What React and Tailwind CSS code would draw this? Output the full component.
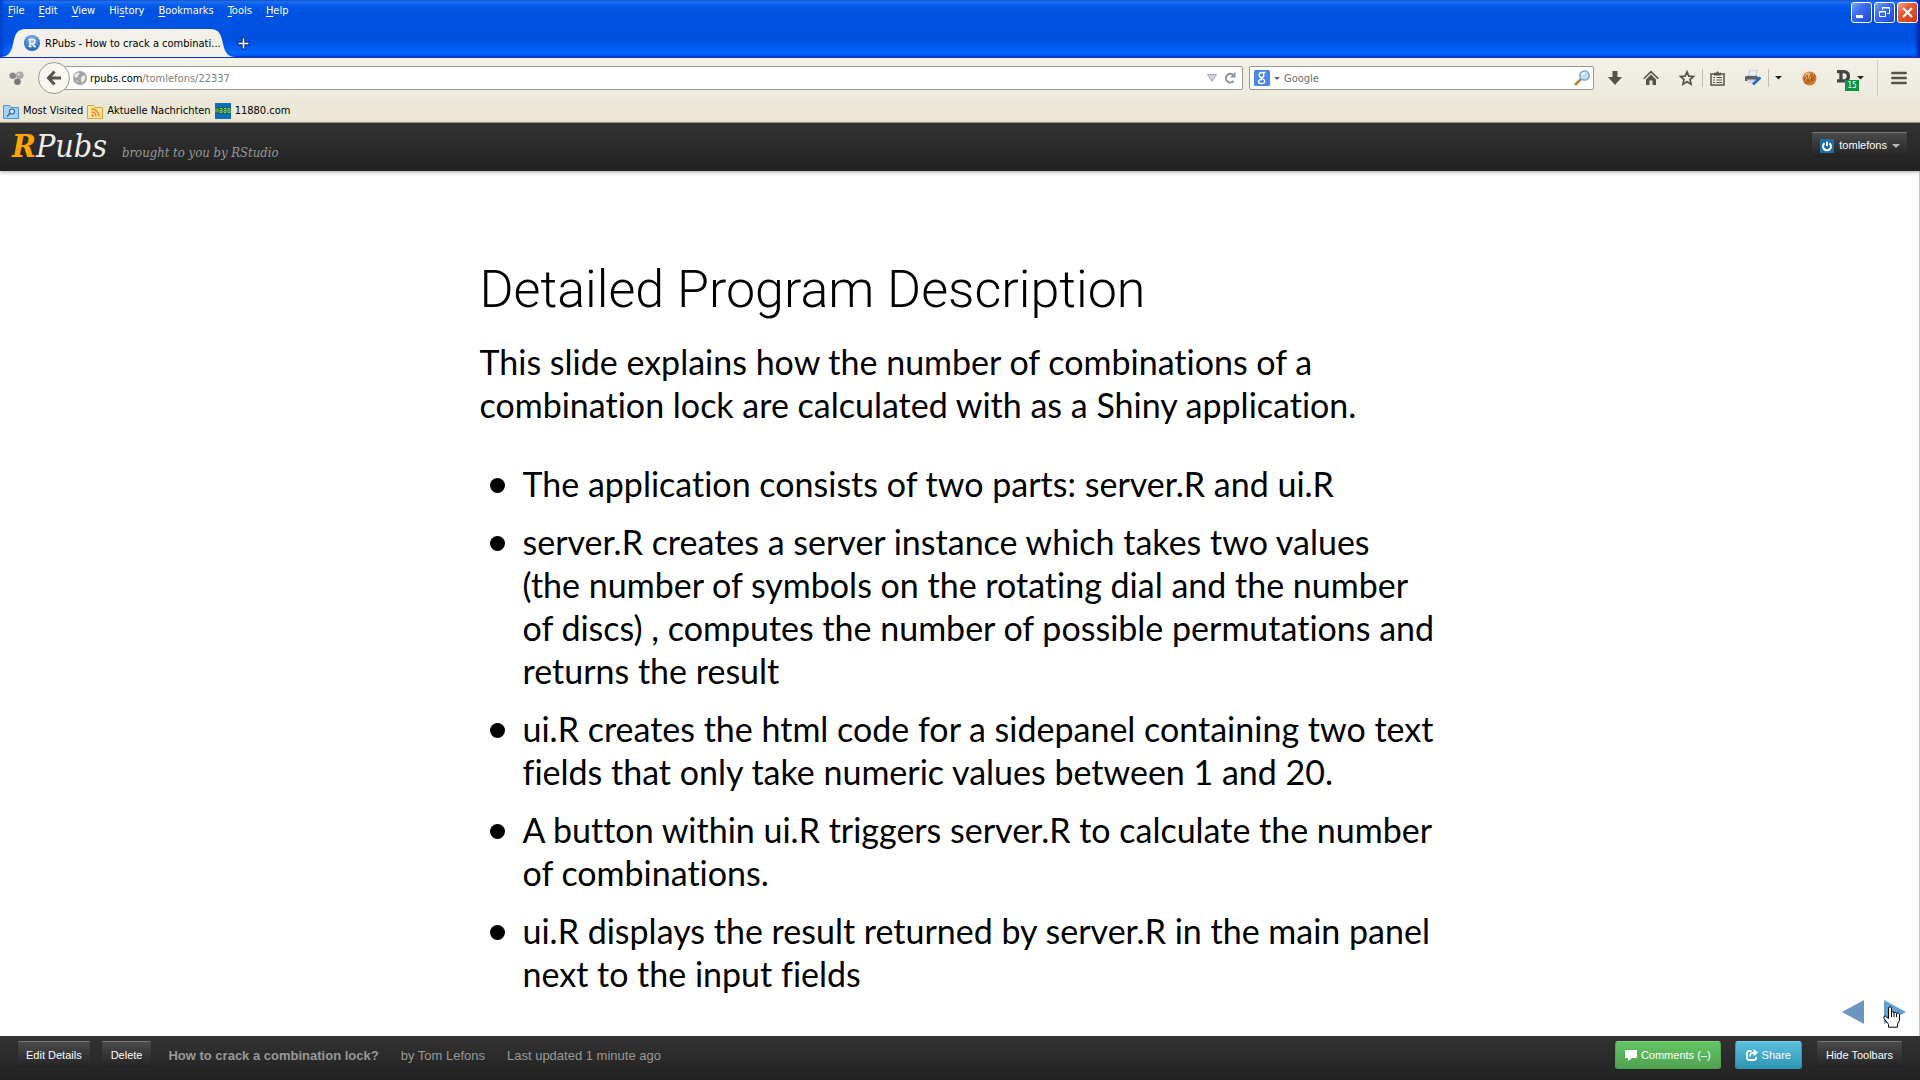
import React from "react";

const menus = ["File", "Edit", "View", "History", "Bookmarks", "Tools", "Help"];
const accessKeys = [0, 0, 0, 2, 0, 0, 0];

const bullets = [
  "The application consists of two parts: server.R and ui.R",
  "server.R creates a server instance which takes two values\n(the number of symbols on the rotating dial and the number\nof discs) , computes the number of possible permutations and returns the result",
  "ui.R creates the html code for a sidepanel containing two text fields that only take numeric values between 1 and 20.",
  "A button within ui.R triggers server.R to calculate the number of combinations.",
  "ui.R displays the result returned by server.R in the main panel next to the input fields",
];

function MenuLabel({ text, at }) {
  return (
    <>
      {text.slice(0, at)}
      <span className="underline underline-offset-2">{text[at]}</span>
      {text.slice(at + 1)}
    </>
  );
}

function Caret({ className }) {
  return (
    <svg viewBox="0 0 8 4" className={className} fill="currentColor" aria-hidden="true">
      <path d="M0 0h8L4 4z" />
    </svg>
  );
}

function TitleBar() {
  return (
    <header className="flex h-[58px] shrink-0 flex-col border-b border-[#0838b8] bg-[linear-gradient(180deg,#3d95ff_0px,#0a5fee_4px,#0054e3_10px,#0050e0_40px,#0066ff_52px,#0060f5_56px)] shadow-[inset_-3px_0_3px_#0023a8,inset_3px_0_3px_#0045d0]">
      <div className="flex h-[30px] items-start">
        <nav className="flex gap-[14px] pl-2 pt-[3px] text-[11px] leading-4 text-white">
          {menus.map((m, i) => (
            <button key={m} type="button">
              <MenuLabel text={m} at={accessKeys[i]} />
            </button>
          ))}
        </nav>
        <div className="ml-auto flex gap-[2px] pr-[2px] pt-[2px]">
          <button type="button" aria-label="Minimize" className="size-[21px] rounded-[3px] border border-white bg-[linear-gradient(135deg,#7da2f5,#3a6cf0_40%,#1c48d4)]">
            <svg viewBox="0 0 19 19" aria-hidden="true"><path d="M4 12h7v3H4z" fill="#fff" /></svg>
          </button>
          <button type="button" aria-label="Restore" className="size-[21px] rounded-[3px] border border-white bg-[linear-gradient(135deg,#7da2f5,#3a6cf0_40%,#1c48d4)]">
            <svg viewBox="0 0 19 19" fill="none" stroke="#fff" aria-hidden="true">
              <path d="M7.500 7V4.500H14.500V10.500H12M7 5h8" />
              <path d="M4.500 8.500h6v5h-6zM4 9h7" />
            </svg>
          </button>
          <button type="button" aria-label="Close" className="size-[21px] rounded-[3px] border border-white bg-[linear-gradient(135deg,#f0a088,#e05a35_40%,#c83c14)]">
            <svg viewBox="0 0 19 19" fill="none" stroke="#fff" strokeWidth="2" aria-hidden="true"><path d="M5 5l9 9M14 5l-9 9" /></svg>
          </button>
        </div>
      </div>
      <div className="flex h-7 items-stretch">
        <div className="relative flex w-[236px]">
          <svg viewBox="0 0 236 28" className="absolute inset-0 h-7 w-[236px]" aria-hidden="true">
            <path d="M0 28C8 28 11 24 13 15C15 5 17 0 26 0H210C219 0 221 5 223 15C225 24 228 28 236 28z" fill="#f3f1ea" />
          </svg>
          <div className="relative flex items-center gap-[5px] pl-6 text-[11px] text-black">
            <svg viewBox="0 0 16 16" className="size-4" aria-hidden="true">
              <defs>
                <radialGradient id="rp" cx=".5" cy=".3" r=".7">
                  <stop offset="0" stopColor="#8fc0f0" />
                  <stop offset="1" stopColor="#1a5fb8" />
                </radialGradient>
              </defs>
              <circle cx="8" cy="8" r="8" fill="url(#rp)" />
              <path d="M4.500 4.500h4.300a2 2 0 0 1 0 4H6.500M6 4.500v7M4.500 11.500h3M8 8.500l2.500 3h1.500" fill="none" stroke="#fff" strokeWidth="1.500" />
            </svg>
            <span className="whitespace-nowrap pt-[2px]">RPubs - How to crack a combinati...</span>
          </div>
        </div>
        <button type="button" aria-label="New tab" className="w-5 pl-px">
          <svg viewBox="0 0 14 14" className="size-[13px]" aria-hidden="true">
            <path d="M5.500 1h3v4.500H13v3H8.500V13h-3V8.500H1v-3h4.500z" fill="#fff" stroke="#0b2f86" strokeWidth="1.300" />
          </svg>
        </button>
      </div>
    </header>
  );
}

function NavBar() {
  return (
    <div className="flex h-10 shrink-0 items-center bg-[linear-gradient(180deg,#f3f1e9,#edeadb)] text-[11px]">
      <svg viewBox="0 0 16 16" className="ml-[9px] size-[15px]" aria-hidden="true">
        <circle cx="4" cy="5" r="3.500" fill="#8a8a8a" />
        <circle cx="11.500" cy="4.500" r="4" fill="#a9a9a9" />
        <circle cx="9" cy="11.500" r="3.500" fill="#777" />
        <circle cx="10.500" cy="3.500" r="1.500" fill="#d8d8d8" />
      </svg>
      <button type="button" aria-label="Back" className="relative z-10 ml-[14px] flex size-8 items-center justify-center rounded-full border border-[#9c9a92] bg-[#f8f7f2]">
        <svg viewBox="0 0 16 16" className="size-4" fill="none" stroke="#55534a" strokeWidth="3" aria-hidden="true">
          <path d="M8.500 1.500L2.500 8l6 6.500M3 8h12" />
        </svg>
      </button>
      <div className="-ml-2 flex h-6 min-w-0 flex-1 items-center rounded-r-[2px] border border-[#9c9a92] bg-white pl-[10px]">
        <svg viewBox="0 0 14 14" className="size-[14px] shrink-0" aria-hidden="true">
          <circle cx="7" cy="7" r="7" fill="#a4a4a4" />
          <path d="M2 3l3-1.500 2 1L5 5 3.500 7 1.500 6zM8 6l3-2 1.500 2.500L11 10l-2 2-1-3zM3 9l2 1v2z" fill="#ececec" />
        </svg>
        <span className="ml-[3px] flex-1 whitespace-nowrap pt-[2px] text-[#808080]">
          <span className="text-black">rpubs.com</span>/tomlefons/22337
        </span>
        <svg viewBox="0 0 10 8" className="w-[10px]" aria-hidden="true"><path d="M.5.5h9L5 7.500z" fill="#cdd2d8" stroke="#a9afb6" /></svg>
        <button type="button" aria-label="Reload" className="ml-[7px] mr-[6px]">
          <svg viewBox="0 0 12 12" className="size-3" fill="none" stroke="#8c949e" strokeWidth="2" aria-hidden="true">
            <path d="M9.500 9A4.300 4.300 0 1 1 9 2.800" />
            <path d="M11.500 0v5.500H6z" fill="#8c949e" stroke="none" />
          </svg>
        </button>
      </div>
      <div className="ml-[6px] flex h-6 w-[345px] items-center rounded-[2px] border border-[#9c9a92] bg-white pl-1">
        <svg viewBox="0 0 16 16" className="size-4" aria-hidden="true">
          <rect width="16" height="16" rx="1.500" fill="#4a86e8" />
          <g fill="none" stroke="#fff" strokeWidth="1.400">
            <ellipse cx="7.500" cy="5" rx="2.300" ry="2.500" />
            <path d="M9 2.500h2.500M7 7.800c0 1.300 3.800 1 3.800 3.500 0 3-6.300 3-6.300.2 0-1.500 1.500-2 3.500-2" />
          </g>
        </svg>
        <Caret className="ml-1 w-[6px] text-[#666]" />
        <input aria-label="Search" placeholder="Google" className="ml-1 min-w-0 flex-1 bg-transparent pt-[2px] outline-none placeholder:text-[#6c6c6c]" />
        <svg viewBox="0 0 16 16" className="mr-[3px] size-4" aria-hidden="true">
          <path d="M1 15l6-6" stroke="#b98442" strokeWidth="2.500" />
          <circle cx="10.500" cy="5.500" r="4.700" fill="#bfe0fa" stroke="#6d9ed6" strokeWidth="1.300" />
          <path d="M8 5a3 3 0 0 1 3-2" stroke="#fff" strokeWidth="1.300" fill="none" />
        </svg>
      </div>
      <div className="flex h-10 w-[326px] items-center pl-[14px] text-[#55534a]">
        <button type="button" aria-label="Downloads">
          <svg viewBox="0 0 14 14" className="size-[14px]" fill="currentColor" aria-hidden="true"><path d="M4.500 0h5v6H14l-7 8-7-8h4.500z" /></svg>
        </button>
        <button type="button" aria-label="Home" className="ml-[21px]">
          <svg viewBox="0 0 16 15" className="size-4" fill="none" stroke="currentColor" strokeWidth="1.600" aria-hidden="true">
            <path d="M.7 8.300L8 1.200l7.300 7.100" />
            <path d="M3 9l5-5 5 5v5.500H9.500V10h-3v4.500H3z" fill="currentColor" stroke="none" />
          </svg>
        </button>
        <button type="button" aria-label="Bookmark this page" className="ml-5">
          <svg viewBox="0 0 16 16" className="size-4" fill="none" stroke="currentColor" strokeWidth="1.700" aria-hidden="true">
            <path d="M8 1.800l1.900 4.300 4.600.4-3.500 3.100 1.100 4.600L8 11.700l-4.100 2.500L5 9.600 1.500 6.500l4.600-.4z" />
          </svg>
        </button>
        <span className="ml-[7px] h-[18px] w-px bg-[#c0beb3]" />
        <button type="button" aria-label="Bookmarks list" className="ml-[7px]">
          <svg viewBox="0 0 15 15" className="size-[15px]" fill="none" stroke="currentColor" strokeWidth="1.500" aria-hidden="true">
            <path d="M1 3h13v11H1z" />
            <path d="M3 6.500h2M6.500 6.500H12M3 9h2M6.500 9H12M3 11.500h2M6.500 11.500H12" strokeWidth="1.200" />
            <path d="M4 1.500L6 2l1.500-2L9 2l2-.5V4.500H4z" fill="currentColor" stroke="none" />
          </svg>
        </button>
        <button type="button" aria-label="Print" className="ml-5">
          <svg viewBox="0 0 16 16" className="size-4" aria-hidden="true">
            <path d="M5 0h7l-1 6H3z" fill="#e9edf2" stroke="#9aa" strokeWidth=".6" />
            <path d="M1 6h11l2 2v3H0V7z" fill="#5c6068" />
            <path d="M2 9.500h9l1 4H3z" fill="#cfd6df" />
            <path d="M15.500 7.500L8 14.500" stroke="#1f66c4" strokeWidth="2.600" />
          </svg>
        </button>
        <span className="ml-[7px] h-[18px] w-px bg-[#c0beb3]" />
        <Caret className="ml-[6px] w-[7px] text-[#222]" />
        <button type="button" aria-label="Greasemonkey" className="ml-5">
          <svg viewBox="0 0 15 15" className="size-[15px]" aria-hidden="true">
            <circle cx="7.500" cy="7.500" r="7" fill="#d07a30" />
            <circle cx="6" cy="5" r="3.500" fill="#f0b070" />
            <path d="M2 9l3-5 1 6 3-7 1 6 3-5M3 12l9-3" stroke="#8c4a14" fill="none" strokeWidth=".8" />
          </svg>
        </button>
        <button type="button" aria-label="Page tracker" className="relative ml-5 h-6 w-5">
          <svg viewBox="0 0 14 14" className="absolute left-0 top-1 size-[13px]" aria-hidden="true">
            <path d="M0 0h7.500a6.500 6.500 0 0 1 0 13.500H0V10h2.500V3.500H0zM6 3.500V10h1.200a3.200 3.200 0 0 0 0-6.500z" fill="#444" fillRule="evenodd" />
          </svg>
          <span className="absolute left-[8px] top-[14px] h-[11px] w-[14px] bg-[#0b9444] text-center text-[8px] leading-[11px] text-white">15</span>
        </button>
        <Caret className="w-[7px] text-[#222]" />
        <span className="ml-auto h-9 w-px bg-[#d0cec3]" />
        <button type="button" aria-label="Open menu" className="ml-[13px] mr-[13px]">
          <svg viewBox="0 0 16 14" className="w-4" fill="none" stroke="currentColor" strokeWidth="2.500" strokeLinecap="round" aria-hidden="true"><path d="M1.300 2h13.400M1.300 7h13.400M1.300 12h13.400" /></svg>
        </button>
      </div>
    </div>
  );
}

function BookmarksBar() {
  return (
    <nav className="flex h-[25px] shrink-0 items-center border-b border-[#a5a396] bg-[#ebe8d7] pl-[3px] pt-[2px] text-[11px] text-black">
      <a href="#most" className="flex items-center gap-1">
        <svg viewBox="0 0 16 15" className="w-4" aria-hidden="true">
          <path d="M.5 14.500v-13h6l1.500 2h7.500v11z" fill="#a5d3f5" stroke="#4d94cf" />
          <circle cx="9" cy="7.500" r="2.500" fill="#d8edfc" stroke="#2c5f9b" strokeWidth="1.200" />
          <path d="M7 9.500L4 12.500" stroke="#2c5f9b" strokeWidth="1.500" />
        </svg>
        Most Visited
      </a>
      <a href="#news" className="ml-1 flex items-center gap-1">
        <svg viewBox="0 0 16 15" className="w-4" aria-hidden="true">
          <path d="M.5 14.500v-13h6l1.500 2h7.500v11z" fill="#fbe3a0" stroke="#d8a93c" />
          <path d="M4.500 8a4.500 4.500 0 0 1 4.500 4.500M4.500 5a7.500 7.500 0 0 1 7.500 7.500" fill="none" stroke="#ee8a1d" strokeWidth="1.500" />
          <circle cx="5.500" cy="11.500" r="1.200" fill="#ee8a1d" />
        </svg>
        Aktuelle Nachrichten
      </a>
      <a href="#11880" className="ml-1 flex items-center gap-1">
        <svg viewBox="0 0 16 16" className="size-4" aria-hidden="true">
          <path d="M0 0h16v16H0z" fill="#0a6fb5" />
          <path d="M0 4.500h16v6H0z" fill="#115b6d" />
          <path d="M1 5.500v4M3 5.500v4M5 5.500h2v2H5v2h2v-2M9 5.500h2v2H9v2h2v-2M13 5.500h2v4h-2z" fill="none" stroke="#8fd43a" />
        </svg>
        11880.com
      </a>
    </nav>
  );
}

const darkButton =
  "flex items-center rounded-[3px] border border-[#2a2a2a] border-t-[#777] bg-[linear-gradient(180deg,#4a4a4a,#222)] text-[11px] text-white";

function SiteHeader() {
  return (
    <div className="relative z-10 flex h-12 shrink-0 items-start bg-[linear-gradient(180deg,#333,#222)] px-3 shadow-[0_1px_4px_rgba(0,0,0,0.35)]">
      <a href="#home" className="flex items-baseline pt-px font-['DejaVu_Serif_Condensed','DejaVu_Serif',serif] italic">
        <span className="text-[32px] leading-[44px] text-[#eee]"><b className="text-[#ffa500]">R</b>Pubs</span>
        <span className="ml-[15px] text-[13px] text-[#999]">brought to you by RStudio</span>
      </a>
      <button type="button" className={`${darkButton} ml-auto mt-[9px] h-[27px] gap-[5px] pl-2 pr-[7px] font-['Liberation_Sans',Arial,sans-serif]`}>
        <svg viewBox="0 0 14 14" className="size-[14px]" aria-hidden="true">
          <path d="M0 0h14v14H0z" fill="#1d6fa8" />
          <path d="M4.500 4.200a4 4 0 1 0 5 0M7 2.500V7" fill="none" stroke="#fff" strokeWidth="2" />
        </svg>
        tomlefons
        <Caret className="w-2 text-[#bbb]" />
      </button>
    </div>
  );
}

function Slide() {
  return (
    <main className="relative flex-1 border-r border-[#c8c8c8] bg-white font-[Lato,sans-serif] text-black">
      <article className="mx-auto max-w-[960px] pt-[83px] text-[34px] leading-[43px] [font-variant-ligatures:none]">
        <h1 className="font-[Roboto,sans-serif] text-[52px] font-light leading-[72px]">Detailed Program Description</h1>
        <p className="mt-[14px]">
          This slide explains how the number of combinations of a combination lock are calculated with as a Shiny application.
        </p>
        <ul className="mt-9 flex flex-col gap-[15px]">
          {bullets.map((b) => (
            <li key={b} className="flex">
              <span className="ml-[10px] mr-[18px] mt-4 size-[15px] shrink-0 rounded-full bg-black" />
              <span className="whitespace-pre-line">{b}</span>
            </li>
          ))}
        </ul>
      </article>
      <div className="absolute bottom-3 right-[13px] flex gap-5">
        <button type="button" aria-label="Previous slide">
          <svg viewBox="0 0 22 24" className="h-6" aria-hidden="true"><path d="M22 0v24L0 12z" fill="#6a96c0" /></svg>
        </button>
        <button type="button" aria-label="Next slide" className="relative">
          <svg viewBox="0 0 22 24" className="h-6" aria-hidden="true"><path d="M0 0v24l22-12z" fill="#649fd2" /></svg>
          <svg viewBox="0 0 17 22" className="absolute -left-px top-[6px] w-[17px]" aria-hidden="true">
            <path d="M5.500 1.500q1.500-1.500 3 0V6q1.500-.8 2.500.5 1.500-.8 2.500.7 2-.6 3 1v6l-2 4v3h-9v-3L1 12.500Q0 10 2.500 10l3 2.500z" fill="#fff" stroke="#000" />
            <path d="M8.500 6v5M11 6.500V11M13.500 7.500V11" stroke="#000" />
          </svg>
        </button>
      </div>
    </main>
  );
}

function SiteFooter() {
  return (
    <footer className="flex h-11 shrink-0 items-start bg-[linear-gradient(180deg,#333,#222)] px-[17px] pt-[5px] font-['Liberation_Sans',Arial,sans-serif] shadow-[0_-1px_2px_rgba(0,0,0,0.15)]">
      <button type="button" className={`${darkButton} h-7 px-2`}>Edit Details</button>
      <button type="button" className={`${darkButton} ml-[10px] h-7 px-[9px]`}>Delete</button>
      <p className="ml-4 flex gap-[22px] text-[13px] leading-[30px] text-[#999]">
        <b>How to crack a combination lock?</b>
        <span>by Tom Lefons</span>
        <span>Last updated 1 minute ago</span>
      </p>
      <button type="button" className="ml-auto flex h-7 items-center gap-1 rounded-[3px] border border-[#51a351] border-t-[#7fd07f] bg-[linear-gradient(180deg,#62c462,#51a351)] px-[9px] text-[11px] text-white">
        <svg viewBox="0 0 12 12" className="size-3" fill="#fff" aria-hidden="true"><path d="M0 1h12v8H7l-4 3V9H0z" /></svg>
        Comments (–)
      </button>
      <button type="button" className="ml-[14px] flex h-7 items-center gap-1 rounded-[3px] border border-[#2f96b4] border-t-[#7fcfe6] bg-[linear-gradient(180deg,#5bc0de,#2f96b4)] px-[10px] text-[11px] text-white">
        <svg viewBox="0 0 12 12" className="size-3" fill="none" stroke="#fff" strokeWidth="1.800" aria-hidden="true">
          <path d="M5.500 2H3.200A2 2 0 0 0 1 4.200v4.600A2 2 0 0 0 3.200 11h4.600A2 2 0 0 0 10 8.800V8" />
          <path d="M4 7.500C4 5 5.500 3.600 8 3.600" />
          <path d="M7.500 0L12 3.600 7.500 7.200z" fill="#fff" stroke="none" />
        </svg>
        Share
      </button>
      <button type="button" className={`${darkButton} ml-[14px] h-7 px-[9px]`}>Hide Toolbars</button>
    </footer>
  );
}

export default function App() {
  return (
    <div className="flex min-h-screen flex-col overflow-hidden font-['DejaVu_Sans_Condensed','Noto_Sans',sans-serif]">
      <TitleBar />
      <NavBar />
      <BookmarksBar />
      <SiteHeader />
      <Slide />
      <SiteFooter />
    </div>
  );
}
